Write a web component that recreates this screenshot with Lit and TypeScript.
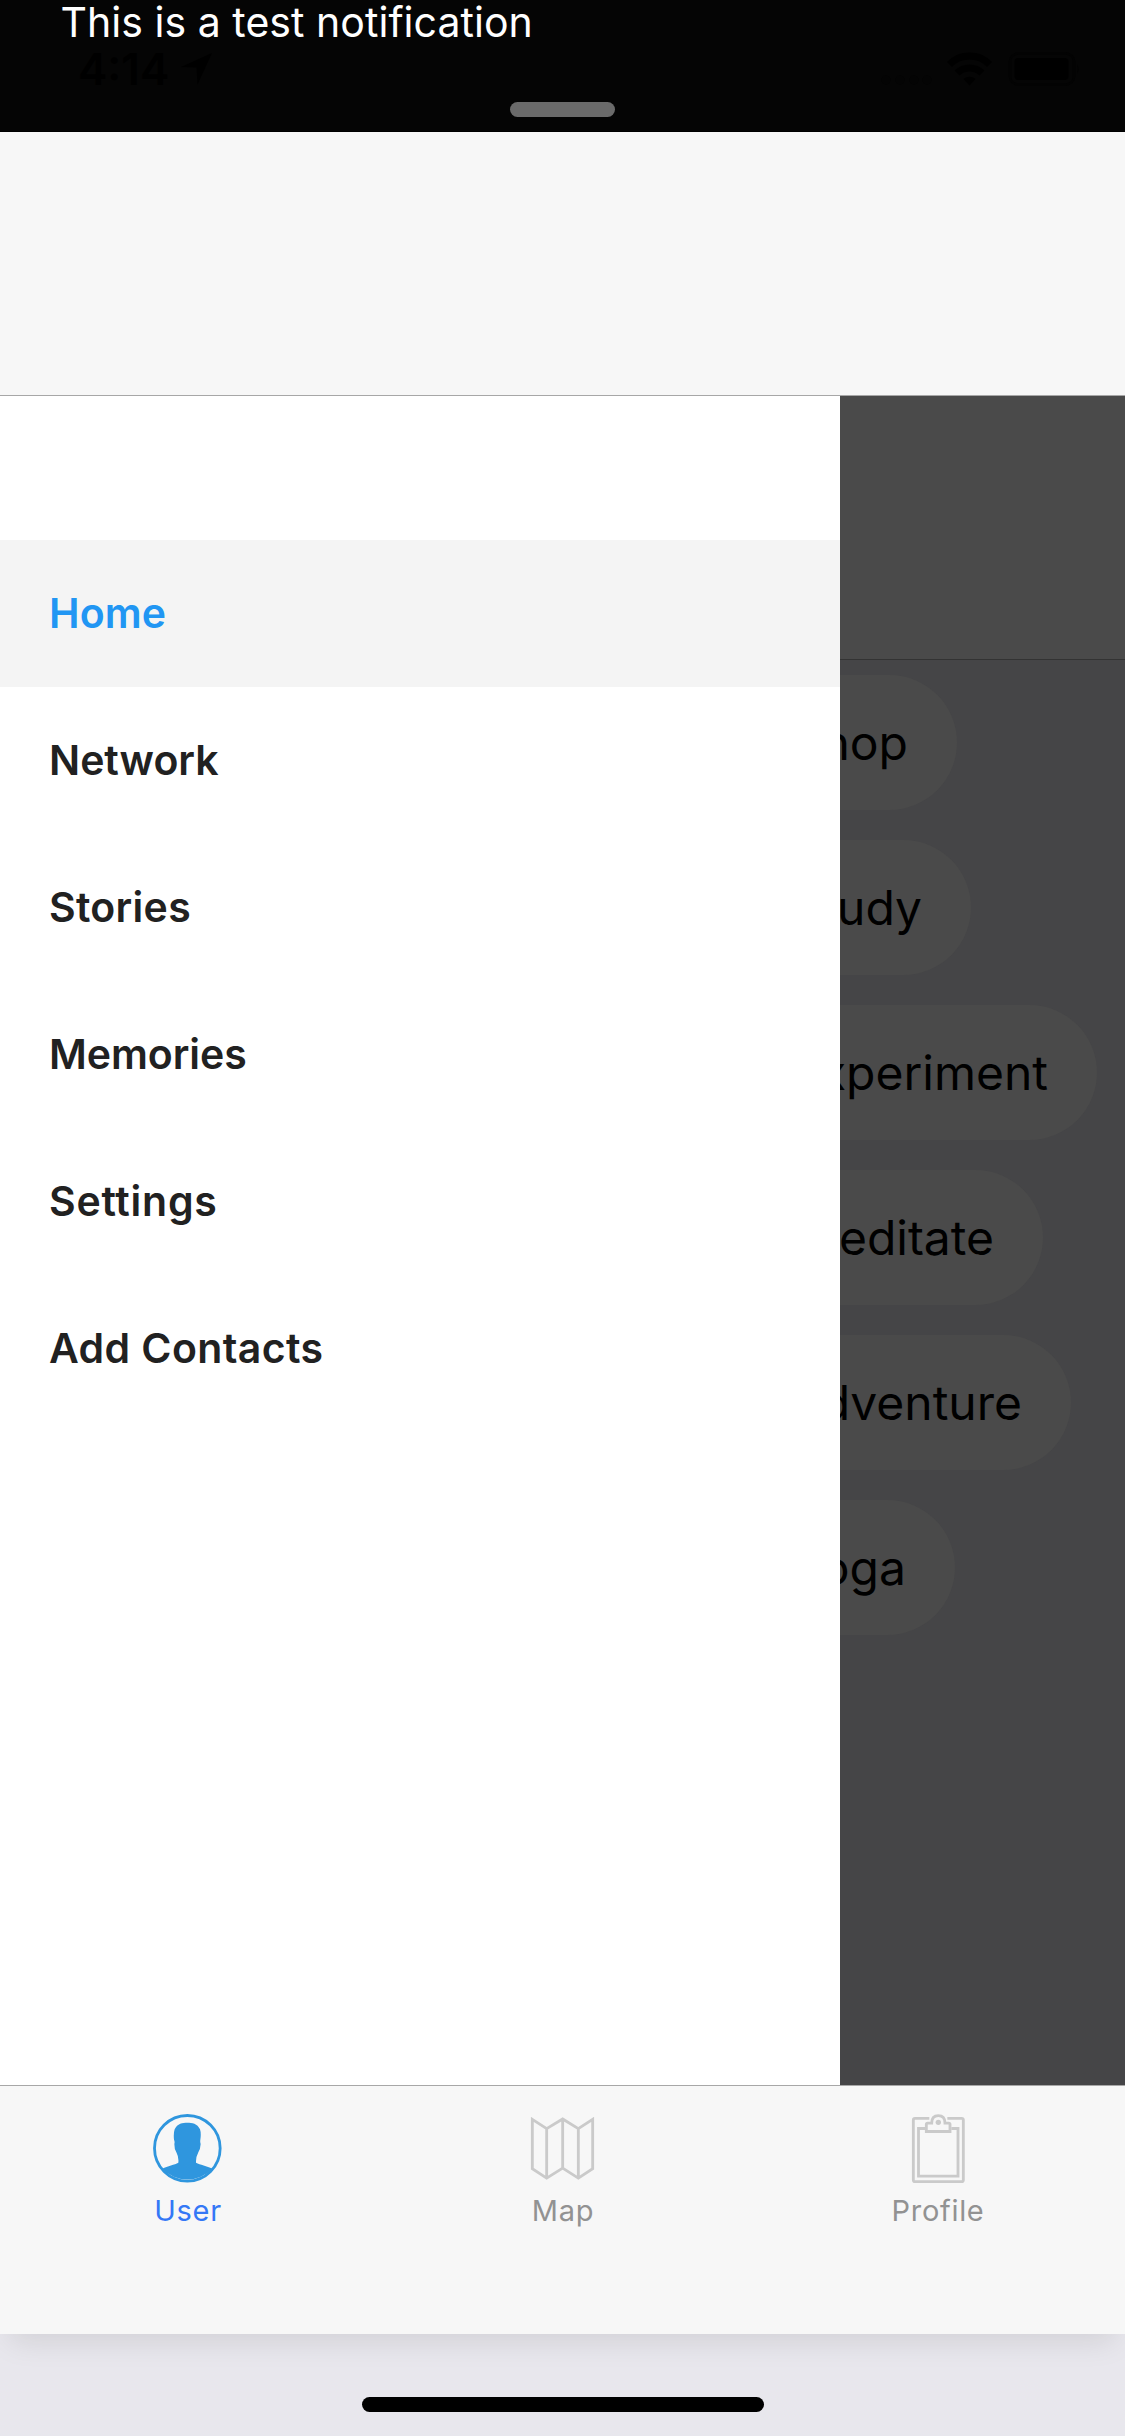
import { LitElement, html, css, svg } from "lit";
import { customElement, property } from "lit/decorators.js";

const FONT = css`"Inter", "Liberation Sans", sans-serif`;

@customElement("notification-banner")
class NotificationBanner extends LitElement {
  static styles = css`
    :host {
      display: flex;
      flex-direction: column;
      align-items: center;
      box-sizing: border-box;
      height: 132px;
      flex: none;
      background: #050505;
      border-bottom: 1px solid #000;
    }
    .message {
      align-self: stretch;
      height: 44px;
      padding-left: 60.5px;
      color: #fff;
      font: 400 41px/44px ${FONT};
      letter-spacing: 0.04px;
      white-space: nowrap;
    }
    .status {
      align-self: stretch;
      box-sizing: border-box;
      height: 58px;
      padding: 0 45px 8px 78px;
      display: flex;
      align-items: center;
      justify-content: space-between;
    }
    .side {
      display: flex;
      align-items: center;
    }
    .time {
      font: 600 44px/50px ${FONT};
      color: #000;
      width: 102px;
    }
    .grabber {
      width: 105px;
      height: 15px;
      border-radius: 7.5px;
      background: #6b6b6b;
    }
    svg {
      display: block;
    }
  `;

  render() {
    return html`
      <div class="message">This is a test notification</div>
      <div class="status">
        <div class="side">
          <span class="time">4:14</span>
          <svg width="33" height="34" viewBox="0 0 33 34">
            <path d="M32 1 17.500 32.500 16.500 15.500 1 15Z" fill="#000" />
          </svg>
        </div>
        <div class="side">
          <svg width="200" height="34" viewBox="0 0 200 34">
            <g fill="#040404">
              <circle cx="6" cy="28" r="4.500" />
              <circle cx="20" cy="28" r="4.500" />
              <circle cx="34" cy="28" r="4.500" />
              <circle cx="47" cy="28" r="4.500" />
            </g>
            <g fill="none" stroke="#000" stroke-width="7">
              <path d="M69.500 12.500a28 28 0 0 1 40 0" />
              <path d="M77 21a18 18 0 0 1 25 0" />
            </g>
            <path d="M83.500 27a9 9 0 0 1 12 0L89.500 33.500Z" fill="#000" />
            <rect x="130" y="1.500" width="64" height="31" rx="8" fill="none" stroke="#030303" stroke-width="2.500" />
            <rect x="134.500" y="6" width="54" height="22" rx="4" fill="#000" />
            <path d="M197 12.500q3.500 4.500 0 9Z" fill="#030303" />
          </svg>
        </div>
      </div>
      <div class="grabber"></div>
    `;
  }
}

interface MenuItem {
  name: string;
  tracking: number;
}

@customElement("nav-drawer")
class NavDrawer extends LitElement {
  @property() active = "Home";

  static styles = css`
    :host {
      display: block;
      box-sizing: border-box;
      padding-top: 144px;
      background: #fff;
    }
    .item {
      display: flex;
      align-items: center;
      box-sizing: border-box;
      height: 147px;
      padding: 0 0 2px 49px;
      font: 600 41px/50px ${FONT};
      color: #212121;
    }
    .active {
      background: #f4f4f4;
      color: #2196f3;
    }
  `;

  private items: MenuItem[] = [
    { name: "Home", tracking: 0.1 },
    { name: "Network", tracking: 0 },
    { name: "Stories", tracking: 0.3 },
    { name: "Memories", tracking: -0.05 },
    { name: "Settings", tracking: 0.75 },
    { name: "Add Contacts", tracking: 0.4 },
  ];

  render() {
    return this.items.map(
      ({ name, tracking }) =>
        html`<div
          class="item ${name === this.active ? "active" : ""}"
          style="letter-spacing:${tracking}px"
        >${name}</div>`,
    );
  }
}

@customElement("tab-bar")
class TabBar extends LitElement {
  static styles = css`
    :host {
      display: flex;
      box-sizing: border-box;
      height: 249px;
      flex: none;
      background: #f7f7f7;
      border-top: 1px solid #a7a7a7;
      box-shadow: 0 17px 28px -10px rgba(0, 0, 0, 0.1);
    }
    .tab {
      flex: 1;
      display: flex;
      flex-direction: column;
      align-items: center;
      padding-top: 25px;
      color: #929292;
      font: 400 29px/36px ${FONT};
      letter-spacing: 0.7px;
    }
    .selected {
      color: #3478f6;
    }
    .label {
      margin-top: 7px;
      padding-left: 1px;
    }
    svg {
      display: block;
    }
  `;

  private user = svg`
    <svg width="75" height="75" viewBox="150 123 225 225">
      <circle cx="262" cy="235" r="98.500" fill="none" stroke="#2f96de" stroke-width="8.500" />
      <path fill="#2f96de" d="M187 296C203 288 224 284 235 278Q237 262 229 247Q223 238 223 222Q225 216 222 209Q220 190 224 178C232 160 248 158 262 158C276 158 292 160 300 178Q304 190 301 209Q300 216 302 222Q301 238 295 247Q287 262 288 278C300 284 321 288 337 296A103 103 0 0 1 187 296Z" />
    </svg>`;

  private map = svg`
    <svg width="75" height="75" viewBox="135 123 225 225">
      <path fill="none" stroke="#cacaca" stroke-width="8.500" d="M157 148 200 176 248 147 295 176 338 148V296L295 324.500 248 294.500 200 324.500 157 296ZM200 176V325M248 146V295M295 176V325" />
    </svg>`;

  private clipboard = svg`
    <svg width="75" height="75" viewBox="180 123 225 225">
      <g fill="none" stroke="#cacaca" stroke-width="8.500">
        <path d="M268 145H225Q220 145 220 150V330Q220 335 225 335H365Q370 335 370 330V150Q370 145 365 145H322" />
        <path d="M256 175.500H235.500V318.500H354V175.500H334" />
        <path d="M259 184.500V163Q259 159.500 263 159.500H275Q275 137 295 137Q315 137 315 159.500H326Q330 159.500 330 163V184.500Z" />
      </g>
      <circle cx="295" cy="157" r="8" fill="#cacaca" />
    </svg>`;

  render() {
    return html`
      <div class="tab selected">${this.user}<span class="label">User</span></div>
      <div class="tab">${this.map}<span class="label">Map</span></div>
      <div class="tab">${this.clipboard}<span class="label">Profile</span></div>
    `;
  }
}

interface Interest {
  name: string;
  width: number;
}

@customElement("app-root")
class AppRoot extends LitElement {
  static styles = css`
    :host {
      display: flex;
      flex-direction: column;
      width: 1125px;
      height: 2436px;
      overflow: hidden;
      background: #e8e7ed;
    }
    .navbar {
      flex: none;
      box-sizing: border-box;
      height: 264px;
      background: #f7f7f7;
      border-bottom: 1px solid #a7a7a7;
    }
    .body {
      position: relative;
      flex: 1;
      display: flex;
      flex-direction: column;
      background: #454547;
    }
    .inner-bar {
      flex: none;
      box-sizing: border-box;
      height: 264px;
      background: #4a4a4a;
      border-bottom: 1px solid #333;
    }
    .interests {
      display: flex;
      flex-direction: column;
      align-items: flex-start;
      gap: 30px;
      padding: 15px 0 0 747px;
    }
    .pill {
      box-sizing: border-box;
      height: 135px;
      padding-right: 49px;
      border-radius: 68px;
      background: #4a4a4a;
      color: #000;
      font: 400 48px/135px ${FONT};
      text-align: right;
    }
    .drawer {
      position: absolute;
      inset: 0 auto 0 0;
      width: 840px;
    }
    .footer {
      flex: none;
      height: 102px;
      display: flex;
      justify-content: center;
      align-items: flex-end;
      box-sizing: border-box;
      padding-bottom: 24px;
    }
    .indicator {
      width: 402px;
      height: 15px;
      border-radius: 7.5px;
      background: #000;
    }
  `;

  private interests: Interest[] = [
    { name: "Shop", width: 210 },
    { name: "Study", width: 224 },
    { name: "Experiment", width: 350 },
    { name: "Meditate", width: 296 },
    { name: "Adventure", width: 324 },
    { name: "Yoga", width: 208 },
  ];

  render() {
    return html`
      <notification-banner></notification-banner>
      <div class="navbar"></div>
      <div class="body">
        <div class="inner-bar"></div>
        <div class="interests">
          ${this.interests.map(
            (i) => html`<div class="pill" style="width:${i.width}px">${i.name}</div>`,
          )}
        </div>
        <nav-drawer class="drawer"></nav-drawer>
      </div>
      <tab-bar></tab-bar>
      <div class="footer"><div class="indicator"></div></div>
    `;
  }
}
